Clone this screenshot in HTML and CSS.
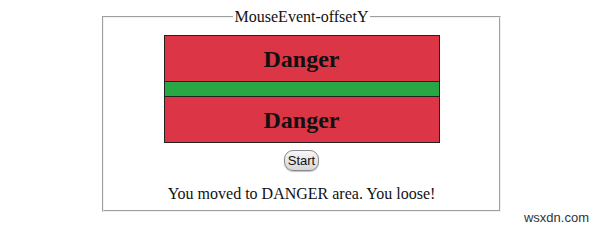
FILE: index.html
```html
<!DOCTYPE html>
<html lang="en">
<head>
    <meta charset="UTF-8">
    <title>MouseEvent-offsetY</title>
    <link rel="stylesheet" href="styles.css">
</head>
<body>
    <fieldset class="panel">
        <legend>MouseEvent-offsetY</legend>
        <div class="board">
            <div class="danger">Danger</div>
            <div class="safe"></div>
            <div class="danger">Danger</div>
        </div>
        <div class="controls">
            <button type="button" class="start-btn">Start</button>
        </div>
        <div class="message">You moved to DANGER area. You loose!</div>
    </fieldset>
    <div class="watermark">wsxdn.com</div>
</body>
</html>
```

FILE: styles.css
```css
* {
    box-sizing: border-box;
}

body {
    margin: 0;
    background: white;
    font-family: 'Liberation Serif', 'Times New Roman', serif;
    color: #111;
    position: relative;
    width: 600px;
    height: 229px;
    overflow: hidden;
}

.panel {
    width: 399px;
    margin: 8px 0 0 102px;
    padding: 9px 12px 7px;
    border: 2px groove #f2f2f2;
}

.panel legend {
    margin: 0 auto;
    padding: 0 2px;
    font-size: 16px;
    line-height: 18px;
}

.board {
    width: 276px;
    margin: 0 auto;
    border: 1px solid #222;
}

.danger {
    height: 45px;
    padding-top: 2px;
    background: #dc3545;
    display: flex;
    align-items: center;
    justify-content: center;
    font-size: 24px;
    font-weight: bold;
}

.safe {
    height: 16px;
    background: #28a745;
    border-top: 1px solid #222;
    border-bottom: 1px solid #222;
}

.controls {
    display: flex;
    justify-content: center;
    margin-top: 7px;
}

.start-btn {
    height: 21px;
    padding: 0 3px;
    font-family: 'Liberation Sans', Arial, sans-serif;
    font-size: 13px;
    color: #111;
    background: linear-gradient(#f6f6f6, #d8d8d8);
    border: 1px solid #8a8a8a;
    border-radius: 9px;
    box-shadow: 0 1px 1px rgba(0,0,0,0.25);
}

.message {
    margin-top: 14px;
    text-align: center;
    font-size: 16px;
    line-height: 18px;
}

.watermark {
    position: absolute;
    right: 11px;
    bottom: 4px;
    font-family: 'Liberation Sans', Arial, sans-serif;
    font-size: 13px;
    color: #333;
}
```
